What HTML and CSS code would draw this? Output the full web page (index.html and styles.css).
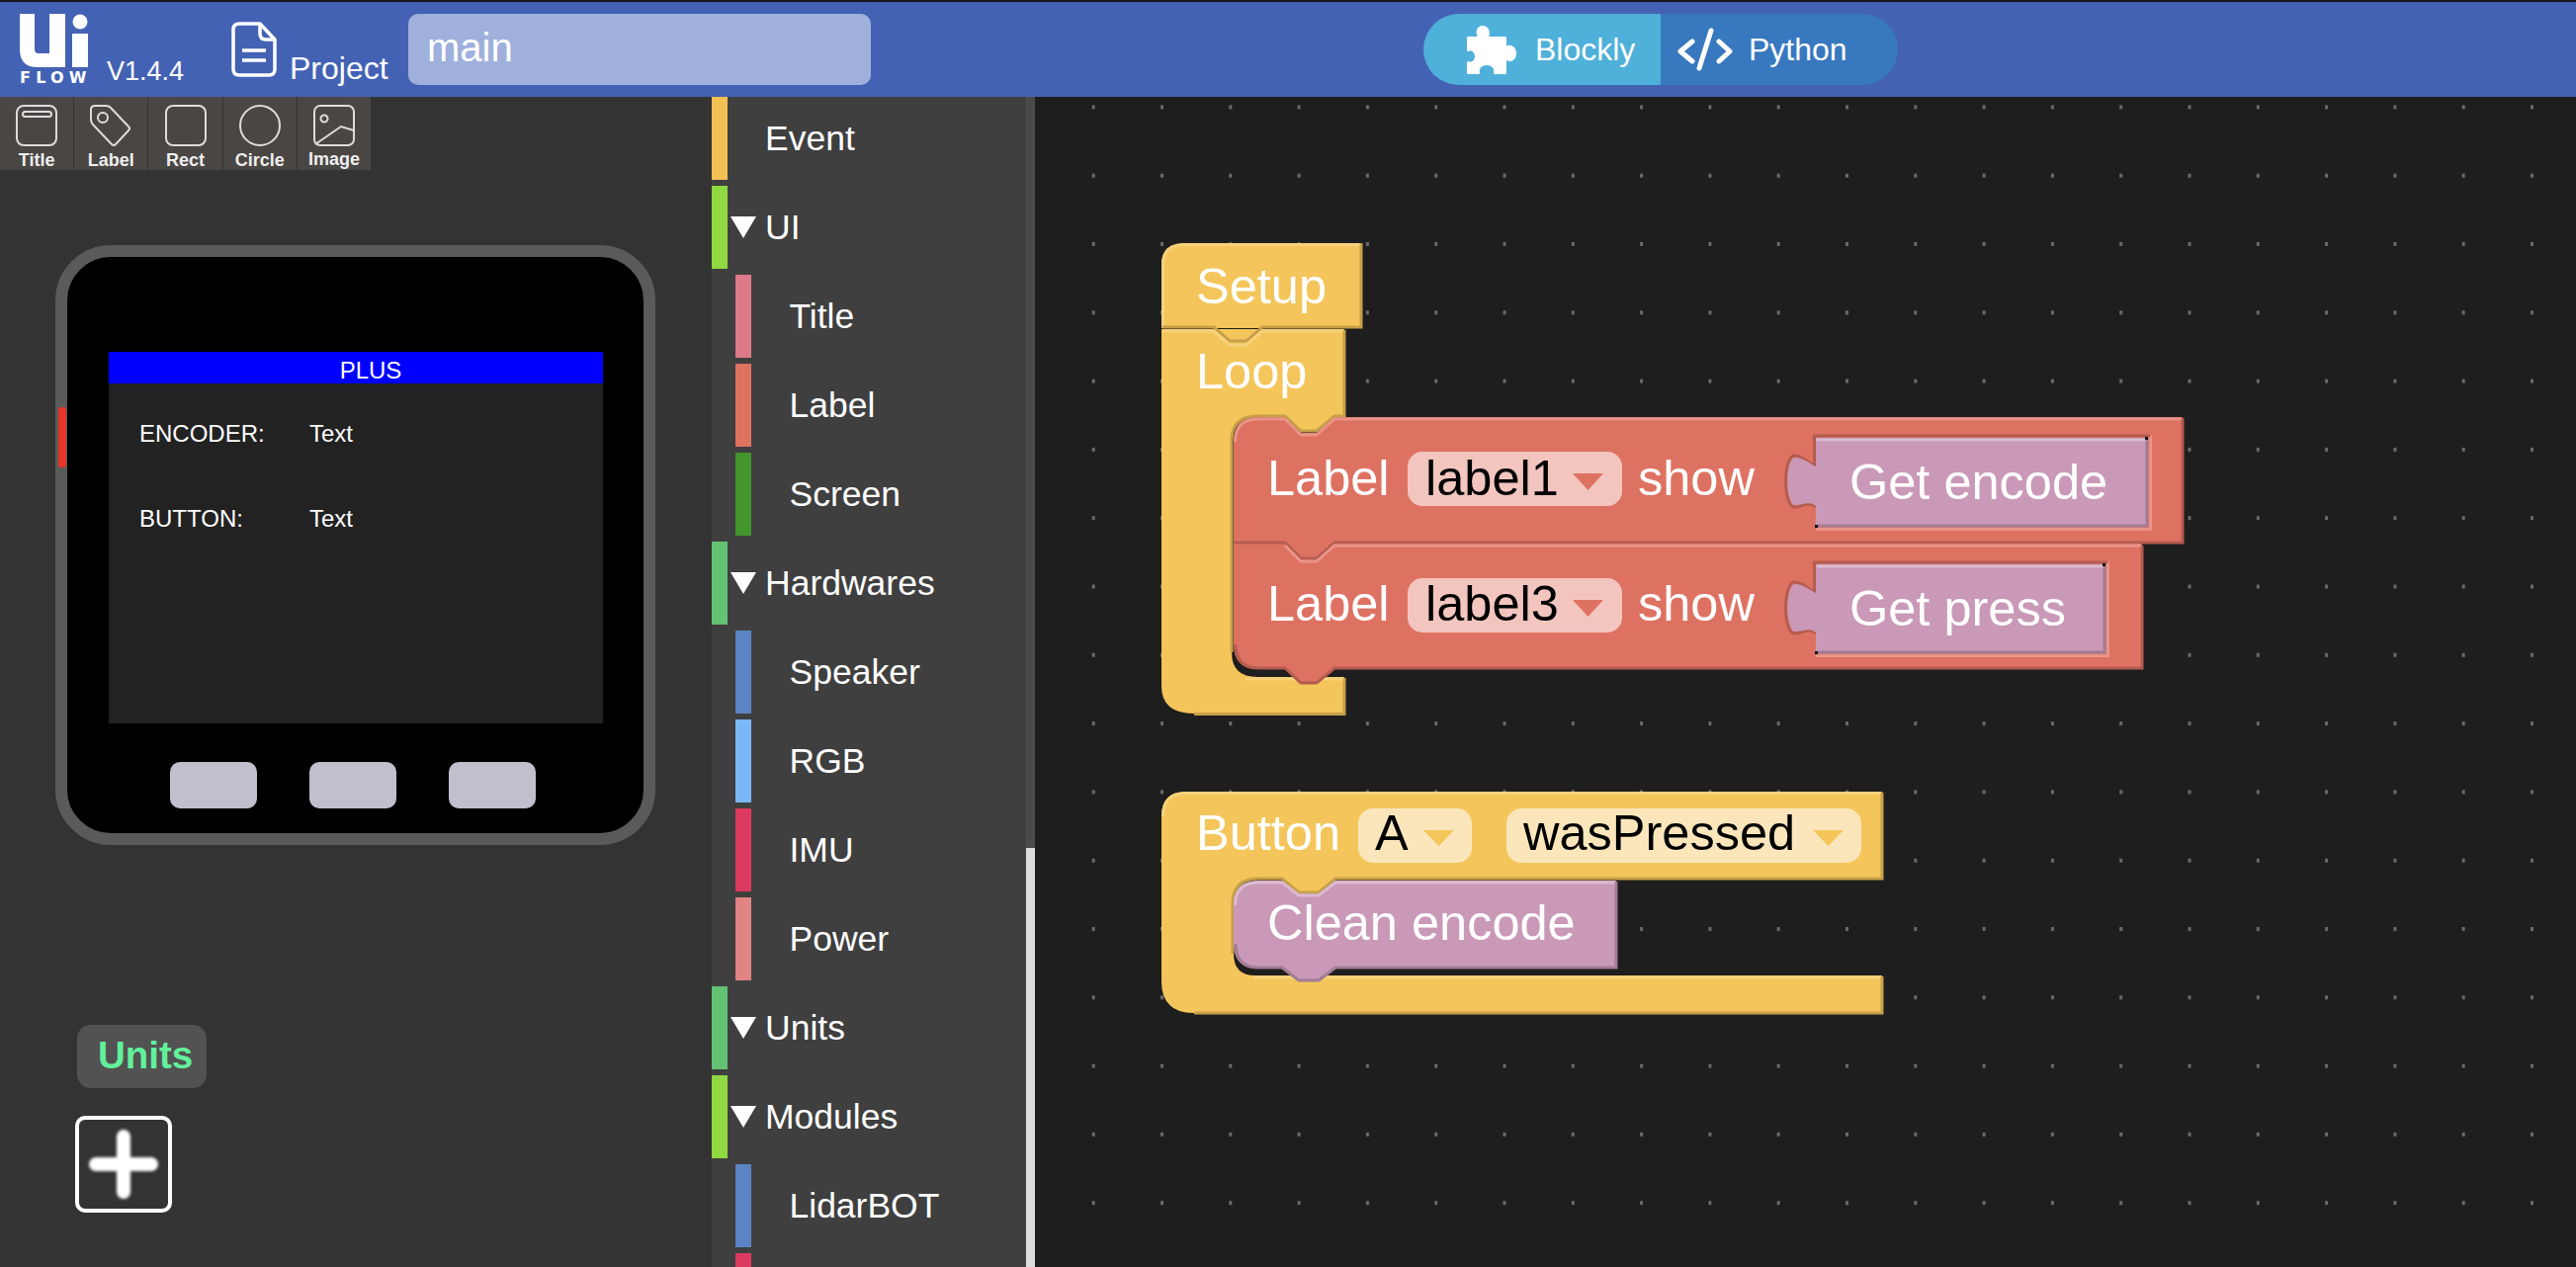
FILE: index.html
```html
<!DOCTYPE html>
<html lang="en">

<head>
  <meta charset="UTF-8">
  <title>UiFlow</title>
  <link rel="stylesheet" href="styles.css">
</head>

<body>
  <header class="topbar">
    <div class="logo">
      <svg class="logo-mark" width="69" height="54" viewBox="0 0 69 54">
        <path d="M0 0H15V36Q15 40 19 40H30V0H46V54H18Q0 54 0 36Z" />
        <rect x="53" y="20" width="16" height="34" />
        <circle cx="61" cy="8" r="7.5" />
      </svg>
      <span class="logo-text">FLOW</span>
    </div>
    <span class="version">V1.4.4</span>
    <svg class="file-icon" width="46" height="56" viewBox="0 0 46 56">
      <path d="M8 2H29L44 18V48Q44 54 38 54H8Q2 54 2 48V8Q2 2 8 2Z" />
      <path d="M29 2V12Q29 18 35 18H44" />
      <path d="M11 29H35M11 39H35" />
    </svg>
    <span class="project">Project</span>
    <div class="name-box">main</div>
    <div class="toggle">
      <div class="toggle-half blockly">
        <svg class="puzzle" width="50" height="49" viewBox="0 0 50 49">
          <path d="M1 12H12C9 6 11 1 16 1C21 1 23 6 21 12H39V22C44 19 49 22 49 28C49 34 44 37 39 33V48H28C29 43 26 39 20 39C14 39 11 43 12 48H1V37C5 39 9 36 9 31C9 26 5 23 1 25Z" />
        </svg>
        <span class="blockly-text">Blockly</span>
      </div>
      <div class="toggle-half python">
        <svg class="code" width="60" height="44" viewBox="0 0 60 44">
          <path d="M17 14L5 24L17 34M36 3L24 41M44 14L55 24L44 34" />
        </svg>
        <span class="python-text">Python</span>
      </div>
    </div>
  </header>

  <main class="app">
    <section class="left-panel">
      <div class="tools">
        <div class="tool">
          <svg class="tool-icon" width="44" height="44" viewBox="0 0 44 44">
            <rect x="2" y="2" width="40" height="40" rx="7" />
            <rect x="8" y="8" width="29" height="5" rx="2.5" />
          </svg>
          <span>Title</span>
        </div>
        <div class="tool">
          <svg class="tool-icon" width="44" height="44" viewBox="0 0 44 44">
            <path d="M6 2H17Q20 2 22 4L40 23Q42 25 40 27L27 41Q25 43 23 41L4 21Q2 19 2 16V6Q2 2 6 2Z" />
            <circle cx="14" cy="14" r="5" />
          </svg>
          <span>Label</span>
        </div>
        <div class="tool">
          <svg class="tool-icon" width="44" height="44" viewBox="0 0 44 44">
            <rect x="2" y="2" width="40" height="40" rx="7" />
          </svg>
          <span>Rect</span>
        </div>
        <div class="tool">
          <svg class="tool-icon" width="44" height="44" viewBox="0 0 44 44">
            <circle cx="22" cy="22" r="20" />
          </svg>
          <span>Circle</span>
        </div>
        <div class="tool tool-raised">
          <svg class="tool-icon" width="44" height="44" viewBox="0 0 44 44">
            <rect x="2" y="2" width="40" height="40" rx="6" />
            <circle cx="12" cy="15" r="3.5" />
            <path d="M3 41L29 23L42 27" />
          </svg>
          <span>Image</span>
        </div>
      </div>

      <div class="device">
        <div class="side-key"></div>
        <div class="screen">
          <div class="screen-title">PLUS</div>
          <div class="screen-row"><span class="screen-label">ENCODER:</span><span>Text</span></div>
          <div class="screen-row screen-row-2"><span class="screen-label">BUTTON:</span><span>Text</span></div>
        </div>
        <div class="device-buttons">
          <div class="device-btn"></div>
          <div class="device-btn"></div>
          <div class="device-btn"></div>
        </div>
      </div>

      <div class="units-badge">Units</div>
      <div class="add-unit">
        <svg width="74" height="74" viewBox="0 0 74 74">
          <path d="M37 9V65M9 37H65" />
        </svg>
      </div>
    </section>

    <section class="categories">
      <div class="cat-list">
        <div class="cat"><i class="bar c-event"></i><b class="no-arrow"></b>Event</div>
        <div class="cat"><i class="bar c-ui"></i><b class="arrow"></b>UI</div>
        <div class="cat sub"><i class="bar c-title"></i>Title</div>
        <div class="cat sub"><i class="bar c-label"></i>Label</div>
        <div class="cat sub"><i class="bar c-screen"></i>Screen</div>
        <div class="cat"><i class="bar c-hard"></i><b class="arrow"></b>Hardwares</div>
        <div class="cat sub"><i class="bar c-speaker"></i>Speaker</div>
        <div class="cat sub"><i class="bar c-rgb"></i>RGB</div>
        <div class="cat sub"><i class="bar c-imu"></i>IMU</div>
        <div class="cat sub"><i class="bar c-power"></i>Power</div>
        <div class="cat"><i class="bar c-hard"></i><b class="arrow"></b>Units</div>
        <div class="cat"><i class="bar c-ui"></i><b class="arrow"></b>Modules</div>
        <div class="cat sub"><i class="bar c-speaker"></i>LidarBOT</div>
        <div class="cat sub"><i class="bar c-imu"></i></div>
      </div>
      <div class="scroll-track">
        <div class="scroll-thumb"></div>
      </div>
    </section>

    <section class="workspace">
      <!-- viewBox uses page coordinates so blocks are easy to place -->
      <svg class="canvas" width="1559" height="1184" viewBox="1047 98 1559 1184">
        <defs>
          <pattern id="dots" patternUnits="userSpaceOnUse" x="1174" y="245" width="69.3" height="69.3">
            <rect width="3" height="4" class="dot" />
          </pattern>
        </defs>
        <rect x="1047" y="98" width="1559" height="1184" fill="url(#dots)" />

        <!-- setup + loop -->
        <path class="yellow" d="M1175 332V268Q1175 246 1198 246H1377V332Z" />
        <path class="yellow" d="M1175 333H1360V422H1350L1332 437H1316L1300 422H1272Q1246 422 1246 446V660Q1246 685 1272 685H1360V722H1208Q1175 722 1175 694Z" />
        <path class="y-light" d="M1176.5 332V268Q1176.5 247.5 1198 247.5H1376" />
        <path class="y-dark" d="M1377 246V331H1277L1261 345H1244L1228 331H1176" />
        <path class="y-light" d="M1176 335H1228L1244 349H1261L1277 335H1359" />
        <path class="y-dark" d="M1360 334V421H1350L1332 436H1316L1300 421H1272Q1246 421 1246 446V660" />
        <path class="y-dark" d="M1208 722.5H1360V686" />
        <path class="y-light" d="M1260 687H1359" />
        <text class="bk-text" x="1210" y="307">Setup</text>
        <text class="bk-text" x="1210" y="393">Loop</text>

        <!-- label blocks -->
        <path class="red" d="M1273 422H1300L1316 438H1332L1350 422H2208V549H1248V447Q1248 422 1273 422Z" />
        <path class="red" d="M1248 549H2167V677H1350L1332 692H1316L1300 677H1273Q1248 677 1248 652Z" />
        <path class="r-light" d="M1249.500 447Q1249.500 424 1273 424H1300L1316 440H1332L1350 424H2207" />
        <path class="r-dark" d="M1248 549H1300L1316 565H1332L1350 549H2208V423" />
        <path class="r-light" d="M1300 552L1316 568H1332L1350 552H2166" />
        <path class="r-dark" d="M1250 652Q1250 676 1273 676H1300L1316 691H1332L1350 676H2167V552" />

        <text class="bk-text" x="1282" y="501">Label</text>
        <rect class="field-red" x="1424" y="457" width="217" height="55" rx="15" />
        <text class="bk-field" x="1442" y="501">label1</text>
        <path class="tri-red" d="M1591 479H1622L1606.500 496Z" />
        <text class="bk-text" x="1657" y="501">show</text>

        <path class="r-light" d="M2175.500 441V535.500H1837" />
        <path class="r-dark" d="M1837 513C1830 506 1822 514 1814 513C1804 508 1804 466 1814 461C1822 460 1830 468 1835.500 472V441H2175" />
        <path class="purple" d="M1837 443H2173V533H1837V512C1830 506 1822 512 1815 511C1806 506 1806 468 1815 463C1822 462 1830 468 1837 472Z" />
        <path class="p-light" d="M1838 445H2172" />
        <path class="p-dark" d="M1838 532H2172V444" />
        <rect class="tick" x="1836" y="531" width="3" height="3" />
        <rect class="tick" x="2170" y="442" width="3" height="3" />
        <text class="bk-text" x="1871" y="505">Get encode</text>

        <text class="bk-text" x="1282" y="628">Label</text>
        <rect class="field-red" x="1424" y="585" width="217" height="55" rx="15" />
        <text class="bk-field" x="1442" y="628">label3</text>
        <path class="tri-red" d="M1591 607H1622L1606.500 624Z" />
        <text class="bk-text" x="1657" y="628">show</text>

        <path class="r-light" d="M2132.500 569V663.500H1837" />
        <path class="r-dark" d="M1837 641C1830 634 1822 642 1814 641C1804 636 1804 594 1814 589C1822 588 1830 596 1835.500 600V569H2132" />
        <path class="purple" d="M1837 571H2130V661H1837V640C1830 634 1822 640 1815 639C1806 634 1806 596 1815 591C1822 590 1830 596 1837 600Z" />
        <path class="p-light" d="M1838 573H2129" />
        <path class="p-dark" d="M1838 660H2129V572" />
        <rect class="tick" x="1836" y="659" width="3" height="3" />
        <rect class="tick" x="2127" y="570" width="3" height="3" />
        <text class="bk-text" x="1871" y="633">Get press</text>

        <!-- button event -->
        <path class="yellow" d="M1200 801H1904V890H1351L1334 904H1314L1297 890H1273Q1248 890 1248 915V965Q1248 987 1270 987H1904V1025H1208Q1175 1025 1175 993V826Q1175 801 1200 801Z" />
        <path class="y-light" d="M1176.500 826Q1176.500 802.500 1200 802.500H1903" />
        <path class="y-dark" d="M1904 802V889H1351L1334 903H1314L1297 889H1273Q1247 889 1247 915V965" />
        <path class="y-light" d="M1268 989H1903" />
        <path class="y-dark" d="M1208 1025H1904V988" />
        <text class="bk-text" x="1210" y="860">Button</text>
        <rect class="field-yellow" x="1374" y="818" width="115" height="55" rx="15" />
        <text class="bk-field" x="1391" y="860">A</text>
        <path class="tri-yellow" d="M1440 840H1471L1455.500 856Z" />
        <rect class="field-yellow" x="1524" y="818" width="359" height="55" rx="15" />
        <text class="bk-field" x="1541" y="860">wasPressed</text>
        <path class="tri-yellow" d="M1834 840H1865L1849.500 856Z" />

        <path class="purple" d="M1273 891H1297L1314 904H1334L1351 891H1635V980H1351L1334 993H1314L1297 980H1273Q1248 980 1248 955V916Q1248 891 1273 891Z" />
        <path class="p-light" d="M1249.500 916Q1249.500 893 1273 893H1297L1314 906H1334L1351 893H1634" />
        <path class="p-dark" d="M1250 955Q1250 979 1273 979H1297L1314 992H1334L1351 979H1635V892" />
        <text class="bk-text" x="1282" y="951">Clean encode</text>
      </svg>
    </section>
  </main>
</body>

</html>
```

FILE: styles.css
```css
* {
  box-sizing: border-box;
}

html,
body {
  margin: 0;
  height: 100%;
  overflow: hidden;
}

body {
  font-family: "Liberation Sans", Arial, sans-serif;
  background-color: #1e1e1e;
  color: #fff;
}

.topbar {
  display: flex;
  align-items: center;
  height: 98px;
  border-top: 2px solid #16181f;
  background-color: #4462b4;
}

.logo {
  display: flex;
  flex-direction: column;
  width: 69px;
  margin-left: 20px;
}

.logo-mark {
  display: block;
  fill: #fff;
}

.logo-text {
  margin-top: 3px;
  font-family: "DejaVu Sans", sans-serif;
  font-size: 16px;
  font-weight: bold;
  line-height: 16px;
  letter-spacing: 5.2px;
  white-space: nowrap;
}

.version {
  width: 80px;
  margin-left: 19px;
  padding-top: 44px;
  font-size: 27px;
  line-height: 34px;
  white-space: nowrap;
}

.file-icon {
  margin-left: 46px;
  fill: none;
  stroke: #fff;
  stroke-width: 3.5;
  stroke-linejoin: round;
}

.project {
  width: 100px;
  margin-left: 13px;
  padding-top: 37px;
  font-size: 32px;
  line-height: 38px;
  white-space: nowrap;
}

.name-box {
  width: 468px;
  height: 72px;
  margin-left: 20px;
  padding-left: 19px;
  border-radius: 10px;
  background-color: #a0b0dc;
  font-size: 40px;
  line-height: 68px;
}

.toggle {
  display: flex;
  width: 480px;
  height: 72px;
  margin-left: 559px;
  border-radius: 36px;
  overflow: hidden;
  font-size: 32px;
}

.toggle-half {
  display: flex;
  align-items: center;
  width: 240px;
}

.blockly {
  background-color: #4fb0da;
}

.python {
  background-color: #3878be;
}

.puzzle {
  margin-left: 44px;
  fill: #fff;
  stroke: #fff;
  stroke-width: 2;
  stroke-linejoin: round;
}

.blockly-text {
  margin-left: 19px;
}

.code {
  margin-left: 15px;
  fill: none;
  stroke: #fff;
  stroke-width: 5;
  stroke-linecap: round;
  stroke-linejoin: round;
}

.python-text {
  margin-left: 14px;
}

.app {
  display: flex;
  height: 1184px;
}

/* left side with the device preview */
.left-panel {
  width: 720px;
  background-color: #333;
}

.tools {
  display: flex;
  gap: 1px;
  width: 375px;
  height: 74px;
}

.tool {
  display: flex;
  flex-direction: column;
  align-items: center;
  flex: 1;
  background-color: #4a4644;
  font-size: 18px;
  font-weight: bold;
  line-height: 20px;
  color: #eee;
}

.tool-icon {
  display: block;
  margin-top: 7px;
  margin-bottom: 3px;
  fill: none;
  stroke: #ddd;
  stroke-width: 2;
}

.tool-raised span {
  margin-top: -1px;
}

.device {
  position: relative;
  width: 607px;
  height: 607px;
  margin-top: 76px;
  margin-left: 56px;
  padding-top: 96px;
  padding-left: 42px;
  border: 12px solid #5a5a5a;
  border-radius: 56px;
  background-color: #000;
}

.side-key {
  position: absolute;
  top: 152px;
  left: -9px;
  width: 8px;
  height: 61px;
  border-radius: 3px;
  background-color: #e8352a;
}

.screen {
  width: 500px;
  height: 376px;
  background-color: #222;
  font-size: 24px;
}

.screen-title {
  height: 32px;
  padding-left: 30px;
  background-color: #00f;
  line-height: 38px;
  text-align: center;
}

.screen-row {
  display: flex;
  height: 30px;
  margin-top: 36px;
  padding-left: 31px;
  line-height: 30px;
}

.screen-row-2 {
  margin-top: 56px;
}

.screen-label {
  width: 172px;
}

.device-buttons {
  display: flex;
  gap: 53px;
  margin-top: 39px;
  padding-left: 62px;
}

.device-btn {
  width: 88px;
  height: 47px;
  border-radius: 10px;
  background-color: #c0bfcc;
}

.units-badge {
  width: 131px;
  height: 64px;
  margin-top: 182px;
  margin-left: 78px;
  padding-left: 21px;
  border-radius: 14px;
  background-color: #525252;
  color: #62f09a;
  font-size: 38.5px;
  font-weight: bold;
  line-height: 62px;
}

.add-unit {
  width: 98px;
  height: 98px;
  margin-top: 28px;
  margin-left: 76px;
  padding: 8px;
  border: 4px solid #fff;
  border-radius: 10px;
}

.add-unit svg {
  display: block;
  margin: 0;
  fill: none;
  stroke: #fff;
  stroke-width: 14;
  stroke-linecap: round;
  filter: blur(1.6px);
}

/* block categories */
.categories {
  display: flex;
  width: 327px;
  background-color: #3f3f3f;
}

.cat-list {
  flex: 1;
  overflow: hidden;
}

.cat {
  display: flex;
  align-items: center;
  height: 84px;
  margin-bottom: 6px;
  font-size: 35.5px;
}

.sub {
  margin-left: 24px;
}

.bar {
  flex: none;
  width: 16px;
  height: 100%;
}

.sub .bar {
  margin-right: 38.5px;
}

.arrow {
  width: 0;
  height: 0;
  margin: 0 9px 0 3px;
  border-top: 22px solid #fff;
  border-left: 13px solid transparent;
  border-right: 13px solid transparent;
  filter: blur(0.6px);
}

.no-arrow {
  width: 38px;
}

.c-event { background-color: #f3c053; }
.c-ui { background-color: #8fd840; }
.c-title { background-color: #dc7a88; }
.c-label { background-color: #dd7260; }
.c-screen { background-color: #43962b; }
.c-hard { background-color: #64c274; }
.c-speaker { background-color: #5b84c4; }
.c-rgb { background-color: #7ab8f5; }
.c-imu { background-color: #dc3a60; }
.c-power { background-color: #e08484; }

.scroll-track {
  width: 9px;
  padding-top: 760px;
  background-color: #4a4a4a;
}

.scroll-thumb {
  height: 424px;
  background-color: #ddd;
}

/* workspace */
.workspace {
  flex: 1;
  background-color: #1e1e1e;
}

.canvas {
  display: block;
}

.dot {
  fill: #6a6a6a;
}

.tick {
  fill: #111;
}

.yellow { fill: #f4c55a; }
.red { fill: #de7262; }
.purple { fill: #c999b7; }

.y-light,
.y-dark,
.r-light,
.r-dark,
.p-light,
.p-dark {
  fill: none;
  stroke-width: 3;
}

.y-light { stroke: #f7d27c; }
.y-dark { stroke: #c6a049; }
.r-light { stroke: #ea9487; }
.r-dark { stroke: #b45c4f; }
.p-light { stroke: #dcbad0; }
.p-dark { stroke: #a27c94; }

.bk-text,
.bk-field {
  font-family: "Liberation Sans", Arial, sans-serif;
  font-size: 50.5px;
}

.bk-text { fill: #fff; }
.bk-field { fill: #000; }

.field-red { fill: #f2c5bf; }
.field-yellow { fill: #fbe6bc; }
.tri-red { fill: #de7262; }
.tri-yellow { fill: #f4c55a; }
```
